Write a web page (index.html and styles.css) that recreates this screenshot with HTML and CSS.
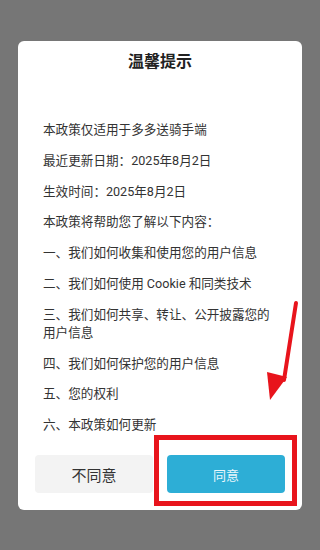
FILE: index.html
```
<!DOCTYPE html>
<html lang="zh-CN">

<head>
    <meta charset="UTF-8">
    <meta name="viewport" content="width=device-width, initial-scale=1.0">
    <title>温馨提示</title>
    <link rel="stylesheet" href="styles.css">
</head>

<body>
    <div class="dialog">
        <h1 class="title">温馨提示</h1>

        <div class="content">
            <p>本政策仅适用于多多送骑手端</p>
            <p>最近更新日期：2025年8月2日</p>
            <p>生效时间：2025年8月2日</p>
            <p>本政策将帮助您了解以下内容：</p>
            <p>一、我们如何收集和使用您的用户信息</p>
            <p>二、我们如何使用 Cookie 和同类技术</p>
            <p>三、我们如何共享、转让、公开披露您的用户信息</p>
            <p>四、我们如何保护您的用户信息</p>
            <p>五、您的权利</p>
            <p>六、本政策如何更新</p>
        </div>

        <div class="buttons">
            <a href="#" class="button button-gray">不同意</a>
            <a href="#" class="button button-blue">同意</a>
        </div>
    </div>

    <!-- red markup drawn over the screenshot -->
    <div class="mark-box"></div>
    <svg class="mark-arrow" width="40" height="110" viewBox="0 0 40 110">
        <line x1="36" y1="3" x2="24" y2="80" stroke="#e8141c" stroke-width="4" stroke-linecap="round" />
        <polygon points="7,72 27,77 10,100" fill="#e8141c" />
    </svg>
</body>

</html>
```

FILE: styles.css
```
body {
    background-color: #767676;
    margin: 0;
    padding: 0;
    font-family: "Roboto", "Noto Sans CJK SC", sans-serif;
    height: 550px;
    overflow: hidden;
}

.dialog {
    margin: 41px 0 0 18px;
    width: 284px;
    background-color: #fff;
    border-radius: 6px;
    padding: 10px 0 17px;
    box-sizing: border-box;
}

.title {
    margin: 0;
    font-size: 16px;
    line-height: 22px;
    font-weight: bold;
    color: #222;
    text-align: center;
}

.content {
    padding: 0 25px;
    margin-top: 48px;
    color: #333;
    font-size: 12.6px;
    line-height: 18px;
}

.content p {
    margin: 0 0 12.8px;
}

.content p:last-child {
    margin-bottom: 0;
}

.buttons {
    display: flex;
    gap: 14px;
    padding: 0 17px;
    margin-top: 21px;
}

.button {
    flex: 1;
    height: 38px;
    display: flex;
    align-items: center;
    justify-content: center;
    border-radius: 4px;
    text-decoration: none;
}

.button-gray {
    background-color: #f3f3f3;
    color: #333;
    font-size: 15px;
}

.button-blue {
    background-color: #2daed6;
    color: #e8f6fb;
    font-size: 13px;
}

.mark-box {
    position: absolute;
    left: 154px;
    top: 435px;
    width: 143px;
    height: 71px;
    border: 5px solid #e8141c;
    box-sizing: border-box;
}

.mark-arrow {
    position: absolute;
    left: 260px;
    top: 300px;
}
```
